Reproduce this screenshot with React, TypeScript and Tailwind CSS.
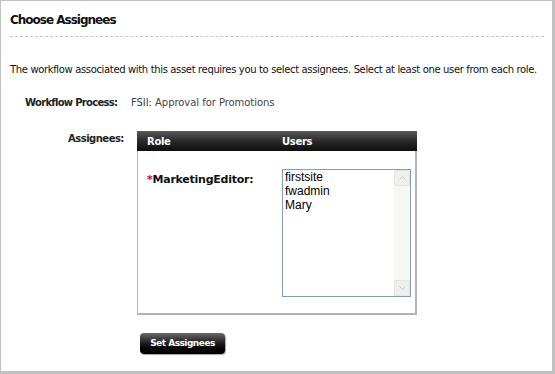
import React from "react";

export default function App() {
  const font = { fontFamily: '"DejaVu Sans", Verdana, sans-serif' };
  return (
    <div className="w-[555px] h-[374px] bg-white overflow-hidden" style={font}>
      <div className="w-[555px] h-[374px] border-l border-t border-r-[3px] border-b-[3px] border-[#c0c0c0] box-border">
        <div className="pl-[9px] pr-[8px]">
          <div className="pt-[10px] h-[27px] text-[12px] font-semibold text-[#111] tracking-[-1px]">Choose Assignees</div>
          <div className="border-t border-dashed border-[#c8c8c8] mt-[8px]" />
          <div className="mt-[25px] text-[10px] text-[#111] tracking-[-0.35px] whitespace-nowrap">
            The workflow associated with this asset requires you to select assignees. Select at least one user from each role.
          </div>
          <div className="flex mt-[18px] text-[10px]">
            <div className="w-[121px] pl-[15px] font-bold text-[#222] tracking-[-0.7px]">Workflow Process:</div>
            <div className="text-[#444] tracking-[-0.05px]">FSII: Approval for Promotions</div>
          </div>
          <div className="flex mt-[21px] text-[10px] tracking-[-0.3px]">
            <div className="w-[127px] pl-[58px] font-bold text-[#222] tracking-[-0.5px]">Assignees:</div>
            <div className="flex flex-col">
              <div className="w-[280px] border-l border-r-2 border-b-2 border-[#b4b4b4] box-border">
                <div className="h-[20px] -mx-px -mr-[2px] flex items-center text-white font-bold bg-gradient-to-b from-[#5a5a5a] via-[#2a2a2a] to-[#0e0e0e]">
                  <div className="w-[145px] pl-[10px]">Role</div>
                  <div>Users</div>
                </div>
                <div className="flex h-[162px] pt-[18px]">
                  <div className="w-[144px] pl-[9px] pt-[3px] text-[11px] font-bold text-[#111] tracking-[-0.25px]">
                    <span className="text-[#d00]">*</span>MarketingEditor:
                  </div>
                  <div className="w-[129px] h-[128px] border border-[#7f9db9] flex bg-white" style={{ fontFamily: '"Liberation Sans", Arial, sans-serif' }}>
                    <div className="flex-1 pl-[2px] text-[12px] leading-[14px] text-black tracking-normal">
                      <div>firstsite</div>
                      <div>fwadmin</div>
                      <div>Mary</div>
                    </div>
                    <div className="w-[16px] bg-[#f6f6f2] flex flex-col justify-between">
                      <div className="h-[16px] border border-[#e6e6e0] bg-[#f0f0ea] rounded-[2px] flex items-center justify-center">
                        <svg width="7" height="4" viewBox="0 0 7 4"><path d="M0.5 3.5 L3.5 0.5 L6.5 3.5" fill="none" stroke="#c9c9c0" strokeWidth="1" /></svg>
                      </div>
                      <div className="h-[16px] border border-[#e6e6e0] bg-[#f0f0ea] rounded-[2px] flex items-center justify-center">
                        <svg width="7" height="4" viewBox="0 0 7 4"><path d="M0.5 0.5 L3.5 3.5 L6.5 0.5" fill="none" stroke="#c9c9c0" strokeWidth="1" /></svg>
                      </div>
                    </div>
                  </div>
                </div>
              </div>
              <div className="mt-[18px] ml-[3px] w-[85px] h-[21px] rounded-[4px] bg-gradient-to-b from-[#6a6a6a] via-[#1c1c1c] to-[#000] shadow-[1px_1px_1px_rgba(0,0,0,0.35)] flex items-center justify-center text-white font-bold text-[9px] tracking-[-0.5px]">
                Set Assignees
              </div>
            </div>
          </div>
        </div>
      </div>
    </div>
  );
}
